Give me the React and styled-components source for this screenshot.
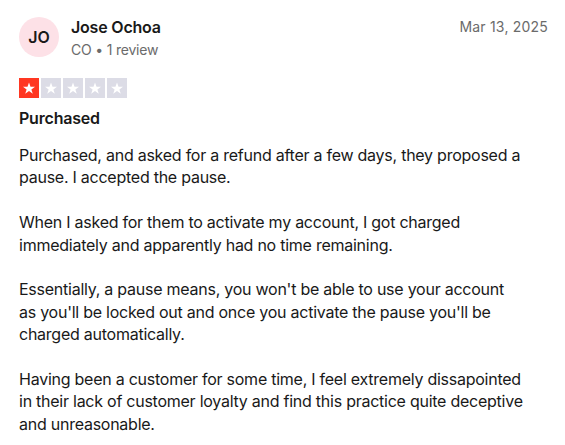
import React from "react";
import styled, { createGlobalStyle } from "styled-components";

const Global = createGlobalStyle`
  html, body { margin: 0; padding: 0; background: #ffffff; }
  body { font-family: Inter, "Noto Sans", sans-serif; color: #191919; -webkit-font-smoothing: antialiased; }
`;

const Card = styled.article`
  width: 529px;
  padding: 17px 17px 0 19px;
  box-sizing: content-box;
`;

const Header = styled.header`
  display: flex;
  align-items: flex-start;
`;

const Avatar = styled.div`
  width: 40px;
  height: 40px;
  border-radius: 50%;
  background: #fde1e7;
  display: flex;
  align-items: center;
  justify-content: center;
  font-size: 16px;
  font-weight: 600;
  color: #191919;
  flex-shrink: 0;
`;

const Consumer = styled.div`
  margin-left: 12px;
  flex: 1;
  display: flex;
  flex-direction: column;
`;

const Name = styled.div`
  font-size: 16px;
  font-weight: 600;
  line-height: 20px;
  letter-spacing: -0.2px;
`;

const Meta = styled.div`
  font-size: 14px;
  line-height: 20px;
  color: #6b6b6b;
  margin-top: 3px;
  letter-spacing: -0.2px;
`;

const DateText = styled.time`
  font-size: 14px;
  line-height: 20px;
  color: #6b6b6b;
  letter-spacing: 0.2px;
`;

const Stars = styled.div`
  display: flex;
  gap: 2px;
  margin-top: 18px;
`;

const StarBox = styled.div`
  width: 20px;
  height: 20px;
  background: ${(p) => (p.$on ? "#ff3722" : "#dcdce6")};
  display: flex;
  align-items: center;
  justify-content: center;
`;

const Title = styled.h2`
  margin: 9px 0 0;
  font-size: 16px;
  font-weight: 600;
  line-height: 22px;
  letter-spacing: -0.2px;
`;

const Body = styled.p`
  margin: 15px 0 0;
  font-size: 16px;
  line-height: 22.4px;
  font-weight: 400;
  letter-spacing: -0.25px;
`;

const Star = () => (
  <svg width="14" height="14" viewBox="0 0 24 24">
    <path
      fill="#fff"
      d="M12 2.5l2.6 7.3h7.7l-6.2 4.6 2.4 7.4L12 17.2l-6.5 4.6 2.4-7.4-6.2-4.6h7.7z"
    />
  </svg>
);

export default function App() {
  return (
    <>
      <Global />
      <Card>
        <Header>
          <Avatar>JO</Avatar>
          <Consumer>
            <Name>Jose Ochoa</Name>
            <Meta>CO • 1 review</Meta>
          </Consumer>
          <DateText>Mar 13, 2025</DateText>
        </Header>
        <Stars>
          {[1, 2, 3, 4, 5].map((i) => (
            <StarBox key={i} $on={i === 1}>
              <Star />
            </StarBox>
          ))}
        </Stars>
        <Title>Purchased</Title>
        <Body>
          Purchased, and asked for a refund after a few days, they proposed a pause. I accepted the pause.
          <br />
          <br />
          When I asked for them to activate my account, I got charged immediately and apparently had no time remaining.
          <br />
          <br />
          Essentially, a pause means, you won't be able to use your account
          <br />
          as you'll be locked out and once you activate the pause you'll be charged automatically.
          <br />
          <br />
          Having been a customer for some time, I feel extremely dissapointed
          <br />
          in their lack of customer loyalty and find this practice quite deceptive and unreasonable.
        </Body>
      </Card>
    </>
  );
}
